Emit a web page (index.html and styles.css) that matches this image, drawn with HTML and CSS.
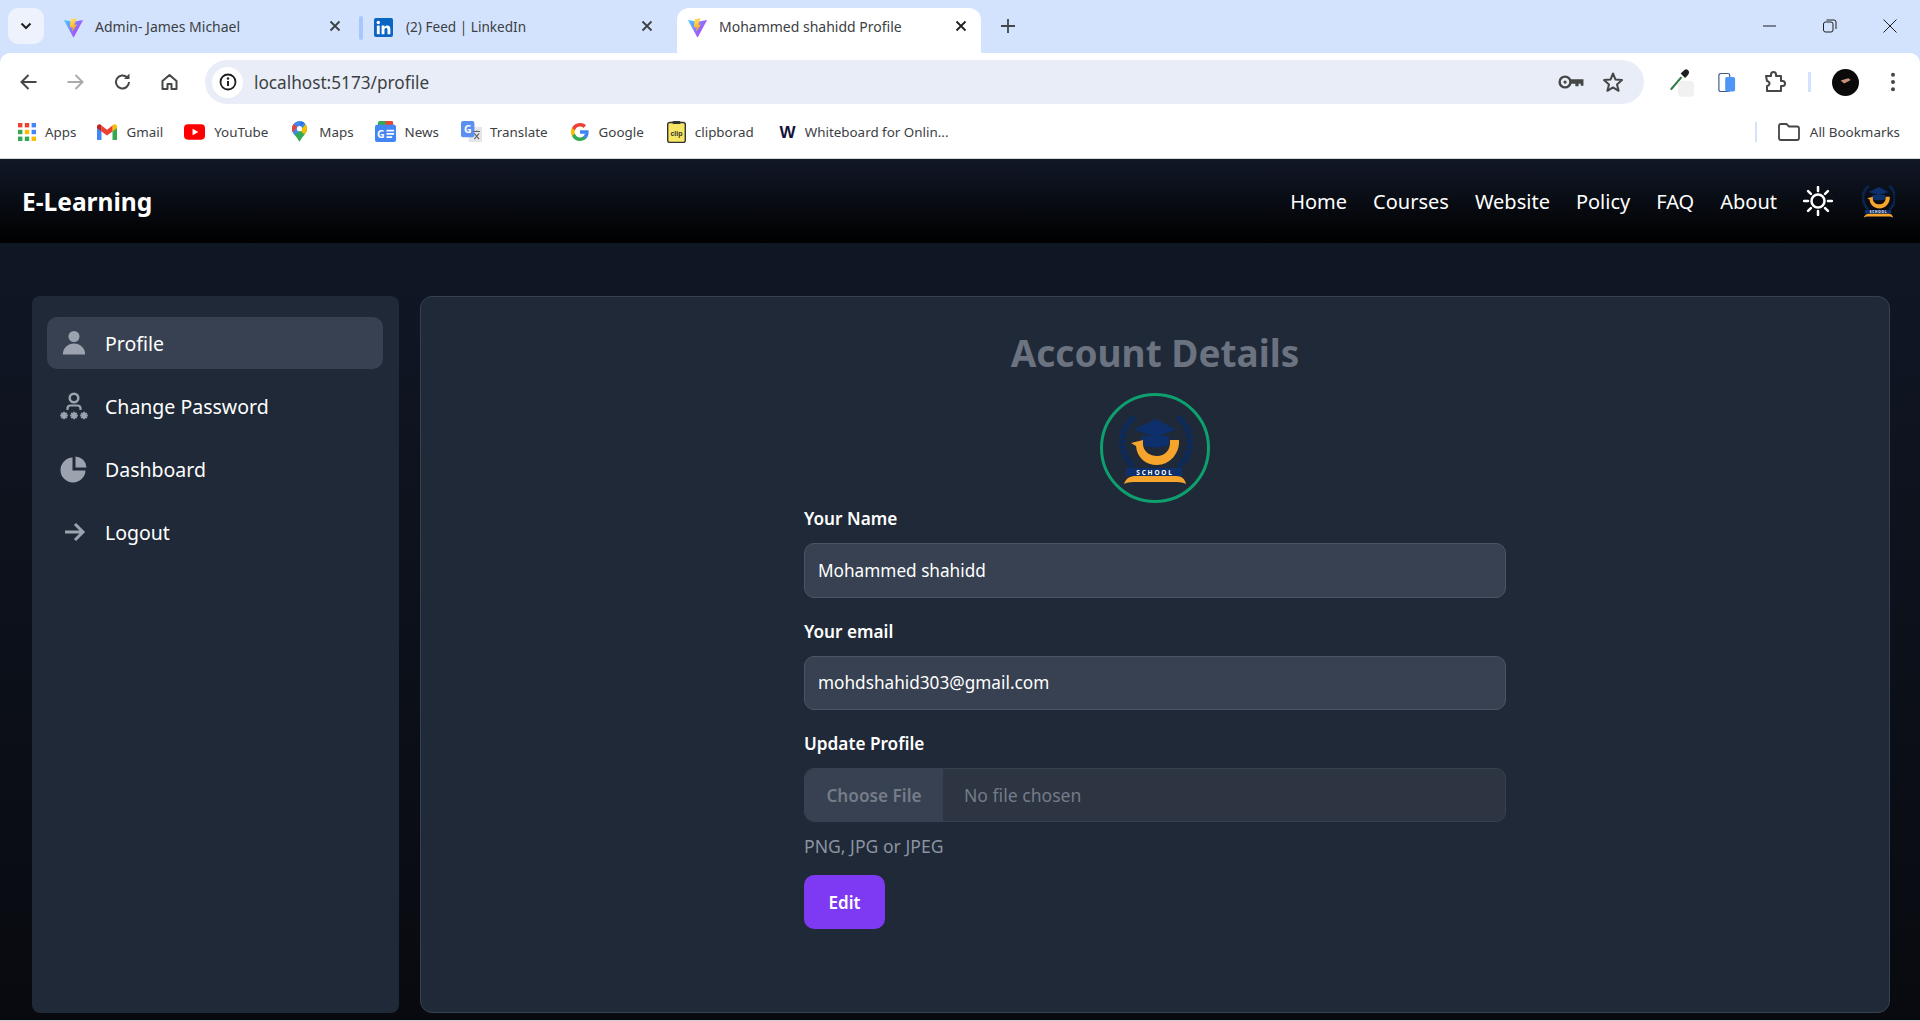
FILE: index.html
```html
<!DOCTYPE html>
<html lang="en">
<head>
<meta charset="utf-8">
<title>Mohammed shahidd Profile</title>
<link rel="stylesheet" href="styles.css">
</head>
<body>
<svg class="defs" width="0" height="0" aria-hidden="true">
  <defs>
    <linearGradient id="viteBody" x1="0" y1="0" x2="1" y2="0.6"><stop offset="0" stop-color="#41d1ff"/><stop offset="1" stop-color="#bd34fe"/></linearGradient>
    <linearGradient id="viteBolt" x1="0" y1="0" x2="0.3" y2="1"><stop offset="0" stop-color="#ffea83"/><stop offset="1" stop-color="#ffa800"/></linearGradient>
    <symbol id="vite" viewBox="0 0 24 24">
      <path d="M1 3.500 12 5.500 23 3.500 12.600 22.500Q12 23.500 11.400 22.500Z" fill="url(#viteBody)"/>
      <path d="M15.500 1 8.500 2.500 8 12 11 11.400 10.400 16.500 16 8.500 13 9Z" fill="url(#viteBolt)"/>
    </symbol>
    <symbol id="school" viewBox="0 0 110 110">
      <g fill="none" stroke="#0b2a5e" stroke-width="6" stroke-dasharray="4 1.200">
        <path d="M34 24C18 38 18 60 34 74"/>
        <path d="M78 24C94 38 94 60 78 74"/>
      </g>
      <path d="M55.700 26 76 36.700 55.700 44 34 36.700Z" fill="#0d2f6b"/>
      <path d="M42 43H69V52Q55 57 42 52Z" fill="#0d2f6b"/>
      <path d="M31 50 43 47 43 52C44 59 50 63 57 63 65 63 71 57 70 47L79 47C80 60 70 72 57 72 46 72 37 65 36 53Z" fill="#f5a52c"/>
      <rect x="26" y="75" width="56" height="8" fill="#0d2f6b"/>
      <text x="55" y="81.500" class="school-word" text-anchor="middle">SCHOOL</text>
      <path d="M24 91C26 85 30 83 36 83H76C82 83 85 86 86 91 82 89 78 89 72 89H38C32 89 28 89 24 91Z" fill="#f5a52c"/>
    </symbol>
  </defs>
</svg>

<div class="browser">
  <div class="tabstrip">
    <button class="tab-list" aria-label="Search tabs"><svg width="12" height="8" viewBox="0 0 12 8"><path d="M1.500 1.500 6 6l4.500-4.500" fill="none" stroke="#1f1f1f" stroke-width="2"/></svg></button>
    <div class="tab tab-first">
      <svg class="fav"><use href="#vite"/></svg>
      <span class="tab-title">Admin- James Michael</span>
      <svg class="tab-x" viewBox="0 0 12 12"><path d="M1.500 1.500l9 9m0-9-9 9" stroke="#3c4043" stroke-width="1.800"/></svg>
    </div>
    <span class="tab-sep"></span>
    <div class="tab tab-second">
      <svg class="fav" viewBox="0 0 20 20"><rect width="20" height="20" rx="2" fill="#0a66c2"/><rect x="3" y="8" width="3" height="9" fill="#fff"/><circle cx="4.500" cy="4.800" r="1.800" fill="#fff"/><path d="M8 8h3v1.400C11.600 8.400 12.800 7.800 14 7.800c2.400 0 3.200 1.500 3.200 4V17h-3v-4.700c0-1.200-.4-1.900-1.500-1.900S11 11.200 11 12.400V17H8Z" fill="#fff"/></svg>
      <span class="tab-title">(2) Feed | LinkedIn</span>
      <svg class="tab-x" viewBox="0 0 12 12"><path d="M1.500 1.500l9 9m0-9-9 9" stroke="#3c4043" stroke-width="1.800"/></svg>
    </div>
    <div class="tab tab-active">
      <svg class="fav"><use href="#vite"/></svg>
      <span class="tab-title">Mohammed shahidd Profile</span>
      <svg class="tab-x" viewBox="0 0 12 12"><path d="M1.500 1.500l9 9m0-9-9 9" stroke="#1f1f1f" stroke-width="1.800"/></svg>
    </div>
    <svg class="new-tab" viewBox="0 0 14 14"><path d="M7 0v14M0 7h14" stroke="#444746" stroke-width="1.800"/></svg>
    <div class="win-controls">
      <svg viewBox="0 0 14 14"><path d="M0 7h13" stroke="#1f1f1f" stroke-width="1"/></svg>
      <svg viewBox="0 0 14 14"><rect x=".5" y="3" width="9.500" height="10" rx="2" fill="none" stroke="#1f1f1f"/><path d="M3.500 1H11q2 0 2 2v7" fill="none" stroke="#1f1f1f"/></svg>
      <svg viewBox="0 0 14 14"><path d="M.5.5l13 13m0-13-13 13" stroke="#1f1f1f"/></svg>
    </div>
  </div>

  <div class="toolbar">
    <div class="nav-btns">
      <svg viewBox="0 0 18 18"><path d="M17 9H2.500M9 2 2 9l7 7" fill="none" stroke="#444746" stroke-width="2"/></svg>
      <svg viewBox="0 0 18 18"><path d="M1 9h14.500M9 2l7 7-7 7" fill="none" stroke="#a9abac" stroke-width="2"/></svg>
      <svg viewBox="0 0 18 18"><path d="M15.500 9A6.500 6.500 0 1 1 13.500 4.300" fill="none" stroke="#444746" stroke-width="2"/><path d="M10.500 6H16V.5Z" fill="#444746"/></svg>
      <svg viewBox="0 0 18 18"><path d="M2 8 9 2l7 6v8h-5v-5H7v5H2Z" fill="none" stroke="#444746" stroke-width="2" stroke-linejoin="round"/></svg>
    </div>
    <div class="omnibox">
      <span class="site-info"><svg width="18" height="18" viewBox="0 0 18 18"><circle cx="9" cy="9" r="7.500" fill="none" stroke="#1f1f1f" stroke-width="1.800"/><path d="M9 8v5" stroke="#1f1f1f" stroke-width="2"/><circle cx="9" cy="5.500" r="1.200" fill="#1f1f1f"/></svg></span>
      <span class="url">localhost:5173/profile</span>
      <svg class="omni-key" viewBox="0 0 24 14"><circle cx="6.500" cy="7" r="5" fill="none" stroke="#444746" stroke-width="2.200"/><circle cx="6.500" cy="7" r="1.500" fill="#444746"/><path d="M11 4.500h12.500v6h-2.500V8.500h-2V11H16V8.500h-5Z" fill="#444746"/></svg>
      <svg class="omni-star" viewBox="0 0 22 22"><path d="M11 2.500 13.500 8.600 20 9.100 15 13.400 16.600 19.800 11 16.400 5.400 19.800 7 13.400 2 9.100 8.500 8.600Z" fill="none" stroke="#444746" stroke-width="2" stroke-linejoin="round"/></svg>
    </div>
    <div class="ext-btns">
      <svg class="ext-dropper" viewBox="0 0 28 32"><path d="M2 24 14 10" stroke="#2f7d44" stroke-width="2.500"/><path d="M13 6l5 5 3-3q3-4 0-6-2-2-5 1Z" fill="#1f1f1f"/><rect x="10" y="14" width="18" height="18" rx="4" fill="#f1f1f1"/></svg>
      <svg class="ext-copy" viewBox="0 0 20 22"><rect x="1" y="1" width="12" height="20" rx="2" fill="#fff" stroke="#3f5b8c" stroke-width="1.300"/><rect x="8" y="5" width="11" height="16" rx="2" fill="#4f94f7"/></svg>
      <svg class="ext-puzzle" viewBox="0 0 22 22"><path d="M2 5h5V3.500a2.500 2.500 0 0 1 5 0V5h5v5h1.500a2.500 2.500 0 0 1 0 5H17v5H3v-5q2.500-.5 2.500-2.500T3 10Z" fill="none" stroke="#444746" stroke-width="2" stroke-linejoin="round"/></svg>
      <span class="ext-sep"></span>
      <svg class="ext-avatar" viewBox="0 0 28 28"><circle cx="14" cy="14" r="14" fill="#0a0a0a"/><path d="M9 12l8-2.500 2.500 2-7 3.500Z" fill="#c9927a"/></svg>
      <svg class="ext-dots" viewBox="0 0 6 22"><circle cx="3" cy="3" r="2.200" fill="#444746"/><circle cx="3" cy="11" r="2.200" fill="#444746"/><circle cx="3" cy="19" r="2.200" fill="#444746"/></svg>
    </div>
  </div>

  <div class="bookmarks">
    <a class="bm bm-apps"><svg class="bm-ico" viewBox="0 0 18 18"><g><rect width="4.400" height="4.400" fill="#ea4335"/><rect x="6.800" width="4.400" height="4.400" fill="#ea4335"/><rect x="13.600" width="4.400" height="4.400" fill="#4285f4"/><rect y="6.800" width="4.400" height="4.400" fill="#34a853"/><rect x="6.800" y="6.800" width="4.400" height="4.400" fill="#fbbc04"/><rect x="13.600" y="6.800" width="4.400" height="4.400" fill="#4285f4"/><rect y="13.600" width="4.400" height="4.400" fill="#34a853"/><rect x="6.800" y="13.600" width="4.400" height="4.400" fill="#34a853"/><rect x="13.600" y="13.600" width="4.400" height="4.400" fill="#fbbc04"/></g></svg>Apps</a>
    <a class="bm bm-gmail"><svg class="bm-ico" viewBox="0 0 20 16"><path d="M0 3V16H4.500V6.500Z" fill="#4285f4"/><path d="M20 3V16H15.500V6.500Z" fill="#34a853"/><path d="M15.500 1.500V7.500L20 4V2Q19 -.5 16.500 .5Z" fill="#fbbc04"/><path d="M4.500 1.500 10 5.700 15.500 1.500V7.500L10 11.500 4.500 7.500Z" fill="#ea4335"/><path d="M0 4 4.500 7.500V1.500L3.500 .5Q1 -.5 0 2Z" fill="#c5221f"/></svg>Gmail</a>
    <a class="bm bm-yt"><svg class="bm-ico" viewBox="0 0 22 16"><rect width="22" height="16" rx="4" fill="#f00"/><path d="M9 4.500 15 8 9 11.500Z" fill="#fff"/></svg>YouTube</a>
    <a class="bm bm-maps"><svg class="bm-ico" viewBox="0 0 16 22"><path d="M8 22C5 16 0 13 0 8A8 8 0 0 1 16 8C16 13 11 16 8 22Z" fill="#34a853"/><path d="M8 0A8 8 0 0 1 14.500 3.300L3 15C1 12 0 10.500 0 8A8 8 0 0 1 8 0Z" fill="#4285f4"/><path d="M1.800 3 5.500 6 1 12Q0 10 0 8 0 5 1.800 3Z" fill="#ea4335"/><path d="M9 0 13 1.500 9 5Z" fill="#1a73e8"/><path d="M14.500 3.300Q16 5.500 16 8 16 11 13 14L9 10Z" fill="#fbbc04"/><circle cx="8" cy="8" r="2.800" fill="#fff"/></svg>Maps</a>
    <a class="bm bm-news"><svg class="bm-ico" viewBox="0 0 22 22"><path d="M3 2Q3 0 5 0H17Q19 0 19 2V6H3Z" fill="#34a853"/><path d="M11 0h6q2 0 2 2v3h-8Z" fill="#ea4335"/><rect y="4" width="22" height="18" rx="2" fill="#4285f4"/><text x="6" y="18" class="news-g" text-anchor="middle">G</text><path d="M12 10h8M12 13.500h8M12 17h6" stroke="#fff" stroke-width="1.800"/></svg>News</a>
    <a class="bm bm-translate"><svg class="bm-ico" viewBox="0 0 22 22"><rect x="8" y="6" width="14" height="16" rx="1" fill="#e4e6e8"/><rect width="14" height="17" rx="2" fill="#5b8ff0"/><text x="7" y="12.500" class="trans-g" text-anchor="middle">G</text><path d="M13 11h7M16.500 10v1.500M14 19l5-6M14 13l5 6" fill="none" stroke="#5f6368" stroke-width="1.200"/></svg>Translate</a>
    <a class="bm bm-google"><svg class="bm-ico" viewBox="0 0 18 18"><path d="M17.640 9.200c0-.64-.06-1.250-.16-1.840H9v3.480h4.840a4.140 4.140 0 0 1-1.800 2.720v2.260h2.920c1.700-1.570 2.680-3.870 2.680-6.620Z" fill="#4285f4"/><path d="M9 18c2.430 0 4.470-.8 5.960-2.180l-2.920-2.260c-.8.540-1.830.86-3.040.86-2.340 0-4.330-1.580-5.040-3.710H.96v2.330A9 9 0 0 0 9 18Z" fill="#34a853"/><path d="M3.960 10.710a5.400 5.400 0 0 1 0-3.420V4.960H.96a9 9 0 0 0 0 8.080Z" fill="#fbbc05"/><path d="M9 3.580c1.320 0 2.500.45 3.440 1.350l2.580-2.580A9 9 0 0 0 .96 4.960l3 2.330C4.670 5.160 6.660 3.580 9 3.580Z" fill="#ea4335"/></svg>Google</a>
    <a class="bm bm-clip"><svg class="bm-ico" viewBox="0 0 19 22"><rect x=".7" y="1.500" width="17.600" height="20" rx="2" fill="#f5e663" stroke="#333" stroke-width="1.400"/><rect x="5.500" y="0" width="8" height="3" rx="1" fill="#333"/><text x="9.500" y="14.500" class="clip-word" text-anchor="middle">clip</text></svg>clipborad</a>
    <a class="bm bm-w"><svg class="bm-ico" viewBox="0 0 18 26"><text x="9" y="19.500" class="w-word" text-anchor="middle">W</text></svg>Whiteboard for Onlin...</a>
    <span class="bm-spacer"></span>
    <span class="bm-sep"></span>
    <a class="bm bm-all"><svg class="bm-ico" viewBox="0 0 22 18"><path d="M1 3q0-2 2-2h5.500l2.500 2.500h8q2 0 2 2V15q0 2-2 2H3q-2 0-2-2Z" fill="none" stroke="#444746" stroke-width="1.800"/></svg>All Bookmarks</a>
  </div>
</div>

<div class="page">
  <header class="navbar">
    <a class="brand">E-Learning</a>
    <nav class="nav-links">
      <a>Home</a>
      <a>Courses</a>
      <a>Website</a>
      <a>Policy</a>
      <a>FAQ</a>
      <a>About</a>
      <svg class="sun" viewBox="0 0 30 30"><circle cx="15" cy="15" r="6.500" fill="none" stroke="#fff" stroke-width="2.500"/><path d="M15 1v4M15 25v4M1 15h4M25 15h4M5.100 5.100l2.800 2.800M22.100 22.100l2.800 2.800M5.100 24.900l2.800-2.800M22.100 7.900l2.800-2.800" stroke="#fff" stroke-width="2.500" stroke-linecap="round"/></svg>
      <svg class="nav-logo" viewBox="20 20 70 74"><use href="#school" width="110" height="110"/></svg>
    </nav>
  </header>

  <main class="layout">
    <aside class="sidebar">
      <a class="side-item side-active">
        <svg class="side-ico" viewBox="0 0 28 28"><circle cx="14" cy="7.500" r="5.500"/><path d="M2.800 25.500C3 18.500 8 14.500 14 14.500s11 4 11.200 11Z"/></svg>
        <span>Profile</span>
      </a>
      <a class="side-item">
        <svg class="side-ico" viewBox="0 0 28 28"><circle cx="14" cy="6" r="4.300" fill="none" stroke="#9ca3af" stroke-width="2.500"/><path d="M7.500 18v-1.500q0-3 3-3h7q3 0 3 3V18" fill="none" stroke="#9ca3af" stroke-width="2.200"/><g stroke="#9ca3af" stroke-width="1.800"><circle cx="4" cy="23.500" r="2.200" fill="#9ca3af" stroke="none"/><circle cx="14" cy="23.500" r="2.200" fill="#9ca3af" stroke="none"/><circle cx="24" cy="23.500" r="2.200" fill="#9ca3af" stroke="none"/><path d="M4 19.800v7.400M.2 23.500h7.600M1.300 20.800l5.400 5.400M6.700 20.800l-5.400 5.400"/><path d="M14 19.800v7.400M10.200 23.500h7.600M11.300 20.800l5.400 5.400M16.700 20.800l-5.400 5.400"/><path d="M24 19.800v7.400M20.200 23.500h7.600M21.300 20.800l5.400 5.400M26.700 20.800l-5.400 5.400"/></g></svg>
        <span>Change Password</span>
      </a>
      <a class="side-item">
        <svg class="side-ico" viewBox="0 0 28 28"><path d="M12.500 2.500V15.500H25.500A12.500 12.500 0 1 1 12.500 2.500Z"/><path d="M15.500 1.500A11.500 11.500 0 0 1 26.500 12.500H15.500Z"/></svg>
        <span>Dashboard</span>
      </a>
      <a class="side-item">
        <svg class="side-ico side-arrow" viewBox="0 0 28 28"><path d="M5 14H23M15 6l8 8-8 8" fill="none" stroke="#9ca3af" stroke-width="3"/></svg>
        <span>Logout</span>
      </a>
    </aside>

    <section class="panel">
      <h1 class="panel-title">Account Details</h1>
      <div class="avatar"><svg class="avatar-img"><use href="#school"/></svg></div>
      <form class="form">
        <label class="field-label" for="name">Your Name</label>
        <input class="field-input" id="name" type="text" value="Mohammed shahidd">
        <label class="field-label" for="email">Your email</label>
        <input class="field-input" id="email" type="text" value="mohdshahid303@gmail.com">
        <div class="field-label">Update Profile</div>
        <div class="file-field">
          <span class="file-btn">Choose File</span>
          <span class="file-name">No file chosen</span>
        </div>
        <p class="file-help">PNG, JPG or JPEG</p>
        <button class="edit-btn" type="button">Edit</button>
      </form>
    </section>
  </main>
</div>
</body>
</html>
```

FILE: styles.css
```css
* { box-sizing: border-box; }
html, body { margin: 0; height: 100%; }
body {
  height: 1021px;
  overflow: hidden;
  display: flex;
  flex-direction: column;
  font-family: "Noto Sans", "Open Sans", sans-serif;
  background: #fff;
}
.defs { position: absolute; }
a { color: inherit; text-decoration: none; }

/* Browser chrome */
.browser { flex: none; background: #d3e3fd; }
.tabstrip { height: 53px; display: flex; align-items: flex-start; position: relative; }
.tab-list {
  width: 36px; height: 36px; margin: 8px 0 0 8px; border: 0; border-radius: 10px;
  background: #edf2fc; display: flex; align-items: center; justify-content: center; padding: 0;
}
.tab { height: 45px; margin-top: 8px; display: flex; align-items: center; color: #3c4043; font-size: 14px; flex: none; }
.tab-first { width: 308px; padding-left: 19px; }
.tab-second { width: 293px; margin-left: 11px; }
.tab-active {
  width: 304px; margin-left: 10px; padding-left: 10px; background: #fff; border-radius: 12px 12px 0 0; position: relative;
}
.fav { width: 21px; height: 21px; flex: none; margin-bottom: 6px; }
.tab-second .fav { width: 19px; height: 19px; }
.tab-title { margin-left: 11px; flex: 1; margin-bottom: 8px; white-space: nowrap; }
.tab-second .tab-title { margin-left: 13px; font-size: 13.6px; }
.tab-x { width: 12px; height: 12px; flex: none; margin: 0 14px 9px 0; }
.tab-first .tab-x { margin-right: 11px; }
.tab-sep { width: 4px; height: 24px; background: #a8c7fa; margin: 16px 0 0 7px; border-radius: 2px; flex: none; }
.new-tab { width: 14px; height: 14px; margin: 19px 0 0 20px; flex: none; }
.win-controls { margin-left: auto; display: flex; gap: 46px; padding: 19px 23px 0 0; }
.win-controls svg { width: 14px; height: 14px; }

.toolbar {
  height: 52px; background: #fff; border-radius: 10px 10px 0 0; display: flex; align-items: flex-start;
  padding: 7px 0 0 5px;
}
.nav-btns { display: flex; flex: none; width: 188px; height: 44px; align-items: center; }
.nav-btns svg { width: 47px; height: 18px; }
.omnibox {
  width: 1439px; height: 44px; margin-left: 12px; border-radius: 22px; background: #e9edf7;
  display: flex; align-items: center; padding-left: 7px; flex: none;
}
.site-info { width: 31px; height: 31px; background: #fff; border-radius: 50%; display: flex; align-items: center; justify-content: center; }
.url { margin-left: 11px; font-size: 17.2px; color: #3c3f42; }
.omni-key { width: 26px; height: 16px; margin-left: auto; }
.omni-star { width: 22px; height: 22px; margin: 0 20px 0 18px; }
.ext-btns { display: flex; align-items: center; height: 44px; flex: none; }
.ext-dropper { width: 25px; height: 29px; margin-left: 25px; }
.ext-copy { width: 18px; height: 21px; margin-left: 24px; }
.ext-puzzle { width: 22px; height: 22px; margin-left: 28px; }
.ext-sep { width: 3px; height: 20px; background: #d3e3fd; margin-left: 22px; }
.ext-avatar { width: 27px; height: 27px; margin-left: 21px; }
.ext-dots { width: 6px; height: 20px; margin-left: 31px; }

.bookmarks {
  height: 54px; background: #fff; border-bottom: 1px solid #d6d6d6; display: flex; align-items: center;
  padding: 0 20px 0 18px; font-size: 13.4px; color: #3c4043;
}
.bm { display: flex; align-items: center; white-space: nowrap; flex: none; }
.bm-ico { flex: none; margin-right: 9px; }
.bm-apps .bm-ico { width: 18px; height: 18px; }
.bm-gmail { margin-left: 21px; } .bm-gmail .bm-ico { width: 20px; height: 16px; }
.bm-yt { margin-left: 21px; } .bm-yt .bm-ico { width: 21px; height: 16px; }
.bm-maps { margin-left: 24px; } .bm-maps .bm-ico { width: 15px; height: 21px; margin-right: 12px; }
.bm-news { margin-left: 21px; } .bm-news .bm-ico { width: 21px; height: 21px; }
.bm-translate { margin-left: 22px; } .bm-translate .bm-ico { width: 21px; height: 21px; margin-right: 8px; }
.bm-google { margin-left: 23px; } .bm-google .bm-ico { width: 18px; height: 18px; margin-right: 10px; }
.bm-clip { margin-left: 23px; } .bm-clip .bm-ico { width: 19px; height: 22px; }
.bm-w { margin-left: 25px; } .bm-w .bm-ico { width: 17px; height: 25px; margin-right: 9px; }
.bm-spacer { flex: 1; }
.bm-sep { width: 2px; height: 20px; background: #d3e3fd; margin-right: 21px; }
.bm-all .bm-ico { width: 22px; height: 18px; margin-right: 10px; }
.news-g { font: 700 11px "Noto Sans", sans-serif; fill: #fff; }
.trans-g { font: 700 11px "Noto Sans", sans-serif; fill: #fff; }
.clip-word { font: 700 7px "Liberation Sans", sans-serif; fill: #333; }
.w-word { font: 700 18px "Liberation Sans", sans-serif; fill: #14123a; }
.school-word { font: 700 6.5px "Noto Sans", sans-serif; fill: #fff; letter-spacing: 1.800px; }

/* Page */
.page {
  flex: 1; min-height: 0; display: flex; flex-direction: column; color: #fff;
  background: linear-gradient(to bottom, #111827, #080a0f);
  border-bottom: 1px solid #d0d0d0;
}
.navbar {
  height: 84px; flex: none; display: flex; align-items: center; justify-content: space-between;
  padding: 0 25px 0 22px; background: linear-gradient(to bottom, #111827, #000);
}
.brand { font-size: 24.5px; font-weight: 700; }
.nav-links { display: flex; align-items: center; gap: 26px; font-size: 20px; }
.sun { width: 30px; height: 30px; }
.nav-logo { width: 33px; height: 35px; margin-left: 3px; }

.layout { flex: 1; min-height: 0; display: flex; gap: 21px; padding: 53px 30px 7px 32px; }
.sidebar {
  width: 367px; flex: none; background: #1f2937; border-radius: 8px; padding: 21px 16px 21px 15px;
  display: flex; flex-direction: column; gap: 11px;
}
.side-item { height: 52px; display: flex; align-items: center; gap: 17px; padding-left: 13px; border-radius: 10px; font-size: 19.5px; }
.side-active { background: #374151; }
.side-ico { width: 28px; height: 28px; flex: none; fill: #9ca3af; }

.panel {
  flex: 1; min-width: 0; background: #1f2937; border: 1px solid #374151; border-radius: 12px;
  display: flex; flex-direction: column; align-items: center; padding-top: 30px;
}
.panel-title { margin: 0; font-size: 37px; line-height: 52px; font-weight: 700; color: #6b7280; }
.avatar { width: 110px; height: 110px; margin-top: 14px; border-radius: 50%; border: 3px solid #0e9f6e; flex: none; }
.avatar-img { width: 110px; height: 110px; margin: -3px; display: block; }
.form { width: 702px; display: flex; flex-direction: column; align-items: flex-start; margin-top: 4px; }
.field-label { font-size: 17.2px; line-height: 24px; font-weight: 600; color: #fff; margin-bottom: 12px; }
.field-input {
  width: 100%; height: 54.500px; padding: 0 13px; margin-bottom: 22px; border: 1px solid #4b5563; border-radius: 10px;
  background: #374151; color: #fff; font: 17.2px "Noto Sans", sans-serif; outline: 0;
}
.file-field {
  width: 100%; height: 54px; display: flex; align-items: center; border: 1px solid #374151; border-radius: 10px;
  background: #2d3542; color: #757c89; overflow: hidden; font-size: 17.6px;
}
.file-btn { width: 138px; height: 100%; display: flex; align-items: center; justify-content: center; background: #374151; font-weight: 600; font-size: 17.2px; }
.file-name { margin-left: 21px; }
.file-help { margin: 12px 0 17px; font-size: 17.6px; line-height: 24px; color: #8b93a1; }
.edit-btn {
  width: 81px; height: 54px; border: 0; border-radius: 10px; background: #7e3af2; color: #fff;
  font: 600 17px "Noto Sans", sans-serif;
}
```
